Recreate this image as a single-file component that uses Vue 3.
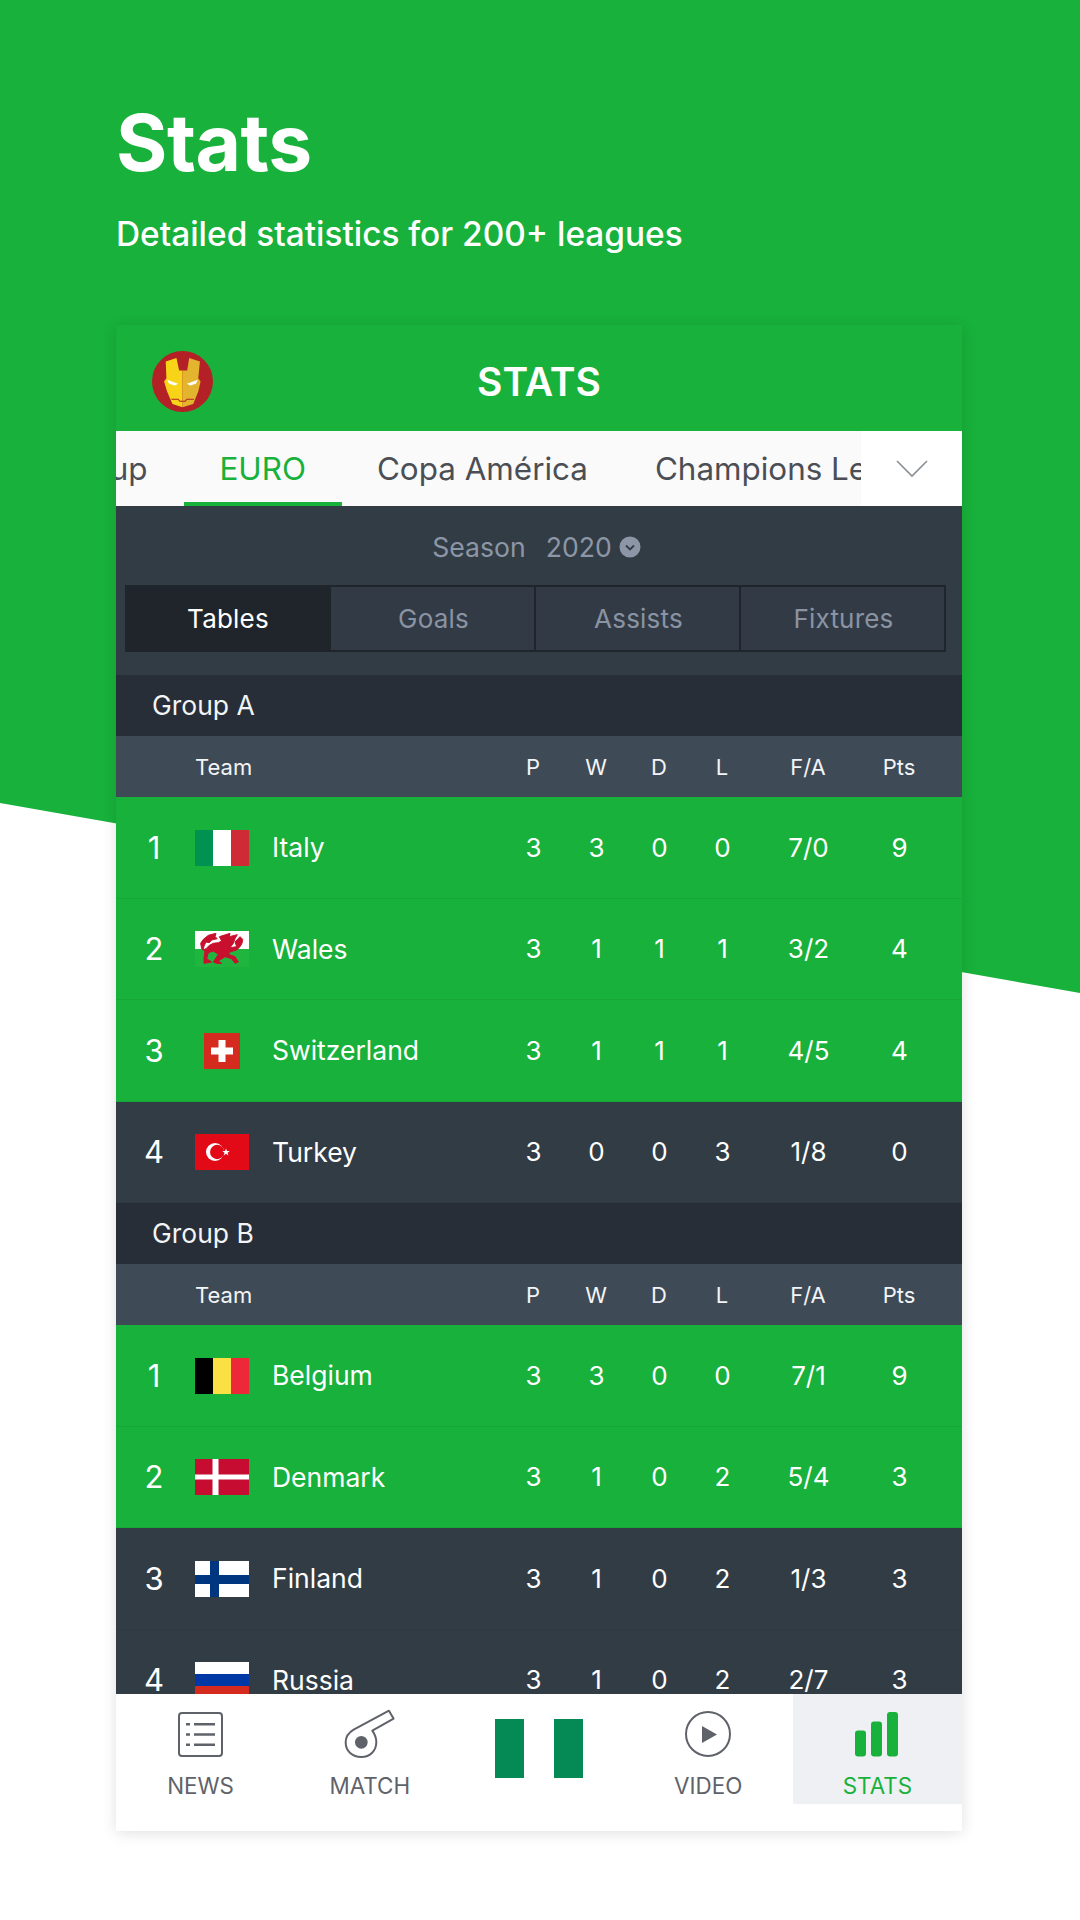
<script setup>
const tabs = ['Copa América', 'Champions League']
const segments = ['Tables', 'Goals', 'Assists', 'Fixtures']
const groups = [
  { name: 'Group A', teams: [
    { r: 1, flag: 'it', name: 'Italy', s: [3, 3, 0, 0, '7/0', 9], q: true },
    { r: 2, flag: 'wl', name: 'Wales', s: [3, 1, 1, 1, '3/2', 4], q: true },
    { r: 3, flag: 'ch', name: 'Switzerland', s: [3, 1, 1, 1, '4/5', 4], q: true },
    { r: 4, flag: 'tr', name: 'Turkey', s: [3, 0, 0, 3, '1/8', 0] },
  ] },
  { name: 'Group B', teams: [
    { r: 1, flag: 'be', name: 'Belgium', s: [3, 3, 0, 0, '7/1', 9], q: true },
    { r: 2, flag: 'dk', name: 'Denmark', s: [3, 1, 0, 2, '5/4', 3], q: true },
    { r: 3, flag: 'fi', name: 'Finland', s: [3, 1, 0, 2, '1/3', 3] },
    { r: 4, flag: 'ru', name: 'Russia', s: [3, 1, 0, 2, '2/7', 3] },
  ] },
]
const heads = ['P', 'W', 'D', 'L', 'F/A', 'Pts']
</script>

<template>
  <div class="page">
    <header class="hero">
      <h1>Stats</h1>
      <p>Detailed statistics for 200+ leagues</p>
    </header>

    <section class="card">
      <div class="topbar">
        <svg class="logo" viewBox="67 64 182 182" width="61" height="61">
          <circle cx="158" cy="155" r="91" fill="#b32025" />
          <path d="M158 122 L148 122 L140 85 L108 95 L110 145 L103 155 L112 185 L128 222 L158 232 Z" fill="#f7d417" />
          <path d="M158 122 L172 122 L178 85 L210 95 L205 145 L212 155 L205 185 L190 222 L158 232 Z" fill="#e3b52f" />
          <path d="M112 150 L145 162 L135 167 L118 162 Z M204 150 L171 162 L181 167 L198 162 Z" fill="#fff" />
          <path d="M125 208 L145 208 L150 214 L166 214 L171 208 L192 208" fill="none" stroke="#b32025" stroke-width="3" />
        </svg>
        <span class="title">STATS</span>
      </div>

      <nav class="tabs">
        <div class="track">
          <span class="tab clipped"><span>World Cup</span></span>
          <span class="tab active">EURO</span>
          <span v-for="t in tabs" :key="t" class="tab">{{ t }}</span>
        </div>
        <div class="more">
          <svg width="34" height="20" viewBox="0 0 34 20"><path d="M2 2 L17 17 L32 2" fill="none" stroke="#8a8f96" stroke-width="1.6" /></svg>
        </div>
      </nav>

      <div class="season">
        <span>Season</span>
        <span class="year">2020</span>
        <svg width="22" height="22" viewBox="0 0 22 22"><circle cx="11" cy="11" r="10.5" fill="#8d96a6" /><path d="M7 9.5 L11 13.5 L15 9.5" fill="none" stroke="#323c45" stroke-width="1.8" /></svg>
      </div>

      <div class="segments">
        <span v-for="(s, i) in segments" :key="s" class="segment" :class="{ on: i === 0 }">{{ s }}</span>
      </div>

      <div class="standings">
        <div v-for="g in groups" :key="g.name" class="group">
          <div class="group-name">{{ g.name }}</div>
          <div class="row head">
            <span class="team-head">Team</span>
            <span v-for="h in heads" :key="h" class="num">{{ h }}</span>
          </div>
          <div v-for="t in g.teams" :key="t.name" class="row team" :class="{ qualified: t.q }">
            <span class="rank">{{ t.r }}</span>
            <span class="flag-cell">
              <svg v-if="t.flag === 'it'" width="54" height="36" viewBox="0 0 3 2"><rect width="1" height="2" fill="#009250" /><rect x="1" width="1" height="2" fill="#fff" /><rect x="2" width="1" height="2" fill="#ce2b37" /></svg>
              <svg v-else-if="t.flag === 'wl'" width="54" height="36" viewBox="45 35 162 108">
                <rect x="45" y="35" width="162" height="54" fill="#fff" /><rect x="45" y="89" width="162" height="54" fill="#1fb53f" />
                <path d="M70 60 L85 48 L108 42 L105 52 L112 58 L95 62 L88 70 L78 68 L72 80 L70 92 L78 88 L88 78 L100 72 L115 70 L125 65 L118 52 L150 42 L148 52 L172 46 L165 58 L160 72 L150 85 L170 82 L165 68 L180 52 L188 60 L186 72 L180 82 L170 92 L150 98 L145 105 L165 112 L175 128 L165 132 L155 118 L135 112 L115 125 L125 132 L110 132 L100 128 L115 105 L100 95 L85 100 L80 118 L95 128 L72 132 L72 118 L75 95 L65 88 L62 72 Z" fill="#c8102e" stroke="#c8102e" stroke-width="3" stroke-linejoin="round" />
              </svg>
              <svg v-else-if="t.flag === 'ch'" width="36" height="36" viewBox="0 0 36 36"><rect width="36" height="36" fill="#d52b1e" /><path d="M14.5 7 H21.5 V14.5 H29 V21.5 H21.5 V29 H14.5 V21.5 H7 V14.5 H14.5 Z" fill="#fff" /></svg>
              <svg v-else-if="t.flag === 'tr'" width="54" height="36" viewBox="0 0 54 36"><rect width="54" height="36" fill="#e30a17" /><circle cx="20" cy="18" r="9" fill="#fff" /><circle cx="22.2" cy="18" r="7.2" fill="#e30a17" /><path d="M31 14.5 L32 17 L34.8 17 L32.6 18.7 L33.4 21.4 L31 19.8 L28.8 21.4 L29.5 18.7 L27.3 17 L30 17 Z" fill="#fff" /></svg>
              <svg v-else-if="t.flag === 'be'" width="54" height="36" viewBox="0 0 3 2"><rect width="1" height="2" fill="#000" /><rect x="1" width="1" height="2" fill="#fae042" /><rect x="2" width="1" height="2" fill="#ed2939" /></svg>
              <svg v-else-if="t.flag === 'dk'" width="54" height="36" viewBox="0 0 54 36"><rect width="54" height="36" fill="#c60c30" /><rect x="17.5" width="6" height="36" fill="#fff" /><rect y="15.5" width="54" height="5" fill="#fff" /></svg>
              <svg v-else-if="t.flag === 'fi'" width="54" height="36" viewBox="0 0 54 36"><rect width="54" height="36" fill="#fff" /><rect x="15" width="9" height="36" fill="#003580" /><rect y="14" width="54" height="9" fill="#003580" /></svg>
              <svg v-else width="54" height="36" viewBox="0 0 3 3" preserveAspectRatio="none"><rect width="3" height="1" fill="#fff" /><rect y="1" width="3" height="1" fill="#0039a6" /><rect y="2" width="3" height="1" fill="#d52b1e" /></svg>
            </span>
            <span class="name">{{ t.name }}</span>
            <span v-for="(v, i) in t.s" :key="i" class="num">{{ v }}</span>
          </div>
        </div>
      </div>

      <footer class="tabbar">
        <div class="item">
          <span class="icon">
            <svg width="45" height="45" viewBox="0 0 45 45"><rect x="1" y="1" width="43" height="43" rx="3" fill="none" stroke="#5f6369" stroke-width="2" /><path d="M16 12.3 H37 M16 22.5 H37 M16 32.7 H37" stroke="#5f6369" stroke-width="2.6" /><path d="M8 12.3 H12 M8 22.5 H12 M8 32.7 H12" stroke="#5f6369" stroke-width="2.6" /></svg>
          </span>
          <span class="label">NEWS</span>
        </div>
        <div class="item">
          <span class="icon">
            <svg width="53.3" height="51.7" viewBox="550 40 160 155"><path d="M688 48 L582 105 C565 115 558 128 558 143 C558 170 578 187 605 187 C632 187 650 168 650 143 C650 130 645 118 638 108 L702 72 Z" fill="none" stroke="#5f6369" stroke-width="6" stroke-linejoin="round" /><circle cx="605" cy="143" r="19" fill="#5f6369" /></svg>
          </span>
          <span class="label">MATCH</span>
        </div>
        <div class="item">
          <div class="nigeria"><i></i><b></b><i></i></div>
        </div>
        <div class="item">
          <span class="icon">
            <svg width="46" height="46" viewBox="0 0 46 46"><circle cx="23" cy="23" r="22" fill="none" stroke="#5f6369" stroke-width="2" /><path d="M17 15 L32 23.5 L17 32 Z" fill="#5f6369" /></svg>
          </span>
          <span class="label">VIDEO</span>
        </div>
        <div class="item current">
          <span class="icon">
            <svg width="44" height="45" viewBox="0 0 44 45"><rect y="18.5" width="11" height="26" rx="3" fill="#18b13b" /><rect x="16" y="9.5" width="11" height="35" rx="3" fill="#18b13b" /><rect x="32" width="11" height="44.5" rx="3" fill="#18b13b" /></svg>
          </span>
          <span class="label">STATS</span>
        </div>
      </footer>
    </section>
  </div>
</template>

<style>
html, body { margin: 0; background: #fff; }
</style>

<style scoped>
* { box-sizing: border-box; }
.page {
  position: relative;
  width: 1080px;
  height: 1920px;
  overflow: hidden;
  padding: 0 118px 0 116px;
  font-family: Inter, "Liberation Sans", sans-serif;
  background: #fff;
}
.page::before {
  content: "";
  position: absolute;
  inset: 0;
  background: #18b13b;
  clip-path: polygon(0 0, 1080px 0, 1080px 993px, 0 803px);
}
.hero, .card { position: relative; }
.hero { height: 325px; padding-top: 102px; color: #fff; }
.hero h1 { margin: 0; font-size: 78.5px; line-height: 82px; font-weight: 700; letter-spacing: -0.5px; }
.hero p { margin: 30px 0 0; font-size: 33.4px; line-height: 40px; font-weight: 500; }
.card {
  width: 846px;
  height: 1506px;
  display: flex;
  flex-direction: column;
  background: #fff;
  box-shadow: 0 2px 14px rgba(0, 0, 0, 0.12);
}
.topbar {
  flex: none;
  height: 106px;
  padding-top: 7px;
  background: #18b13b;
  display: flex;
  align-items: center;
  justify-content: center;
  position: relative;
}
.logo { position: absolute; left: 36px; top: 26px; }
.title { color: #fff; font-size: 39px; font-weight: 600; }
.tabs { flex: none; height: 75px; display: flex; background: #fafafa; }
.track { flex: 1; min-width: 0; display: flex; overflow: hidden; }
.tab {
  flex: none;
  padding: 0 36px;
  font-size: 31.4px;
  line-height: 77px;
  height: 75px;
  color: #4b4f55;
  white-space: nowrap;
}
.tab.clipped { flex: 0 0 67.5px; padding: 0 36px 0 0; display: flex; justify-content: flex-end; overflow: hidden; }
.tab.clipped span { flex: none; }
.tab.active { color: #18b13b; border-bottom: 4px solid #18b13b; }
.tab.active + .tab { padding-left: 35px; }
.tab:last-child { padding-left: 31px; }
.more { flex: 0 0 101px; background: #fff; display: flex; align-items: center; justify-content: center; }
.season {
  flex: none;
  height: 79px;
  background: #323c45;
  display: flex;
  align-items: center;
  justify-content: center;
  padding: 3px 5px 0 0;
  color: #8d96a6;
  font-size: 26.6px;
}
.year { margin: 0 7px 0 20px; }
.segments {
  flex: none;
  height: 90px;
  padding: 0 16px 23px 9px;
  background: #323c45;
  display: grid;
  grid-template-columns: 206px 1fr 1fr 1fr;
}
.segment {
  display: flex;
  align-items: center;
  justify-content: center;
  padding-left: 2px;
  font-size: 26px;
  letter-spacing: 0.2px;
  color: #8a93a3;
  background: #323b45;
  border: 2px solid #1f252b;
  border-left-width: 0;
}
.segment.on { background: #1f252b; color: #fff; }
.standings { flex: 1; min-height: 0; overflow: hidden; background: #323c45; }
.group-name {
  height: 61px;
  padding-left: 36px;
  background: #272e37;
  color: #f2f4f6;
  font-size: 26.5px;
  line-height: 61px;
}
.row {
  display: grid;
  grid-template-columns: 76px 60px 1fr 63px 63px 63px 63px 109px 73px;
  padding-right: 26.5px;
  align-items: center;
}
.head { height: 61px; background: #3f4a57; color: #f2f4f6; font-size: 22px; }
.team-head { grid-column: 2 / 4; padding-left: 3px; }
.team { height: 101.5px; background: #323c45; color: #fff; border-bottom: 1px solid #2f3841; font-size: 26px; }
.team.qualified { background: #18b13b; border-bottom-color: #17a738; }
.team .num { padding-left: 1px; }
.rank { text-align: center; font-size: 31px; }
.flag-cell { display: flex; justify-content: center; padding-top: 1px; }
.flag-cell svg { display: block; }
.name { padding-left: 20px; font-size: 26.5px; }
.num { text-align: center; }
.tabbar {
  flex: none;
  height: 137px;
  display: grid;
  grid-template-columns: repeat(5, 1fr);
  align-items: start;
  background: #fff;
}
.item { height: 110px; display: flex; flex-direction: column; align-items: center; padding-top: 14px; }
.icon { height: 52px; display: flex; align-items: center; justify-content: center; }
.label { margin-top: 13px; font-size: 22.4px; line-height: 26px; color: #5f6369; }
.current { background: #eef0f3; }
.current .label { color: #18b13b; }
.nigeria { display: flex; width: 88px; height: 59px; margin-top: 11px; }
.nigeria i { flex: 1; background: #058a56; }
.nigeria b { flex: 1; background: #fff; }
</style>
